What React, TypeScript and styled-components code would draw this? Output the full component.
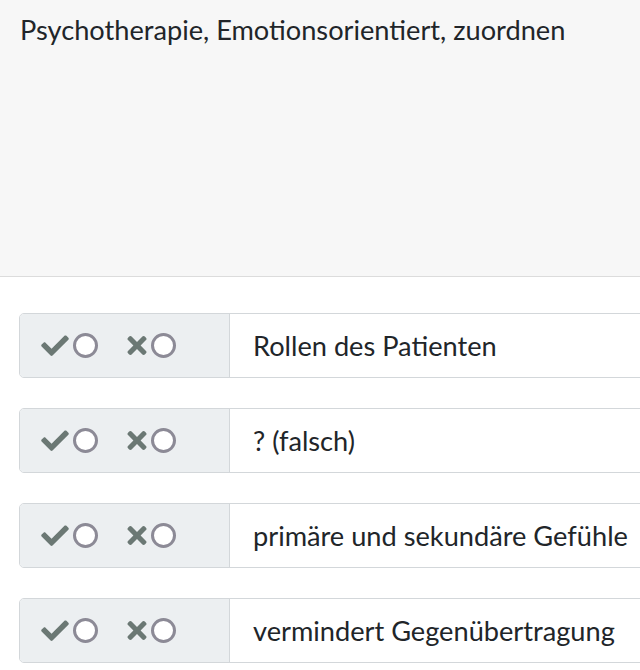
import React from "react";
import styled, { createGlobalStyle } from "styled-components";

const Global = createGlobalStyle`
  html, body { margin: 0; padding: 0; background: #ffffff; }
  body { font-family: Lato, "Open Sans", sans-serif; color: #212529; overflow: hidden; }
  * { box-sizing: border-box; }
`;

const Page = styled.div`
  width: 640px;
  height: 670px;
  overflow: hidden;
`;

const Question = styled.div`
  height: 277px;
  background: #f7f7f7;
  border-bottom: 1px solid #dcdcdc;
  padding: 14px 20px;
  font-size: 27.2px;
  line-height: 32px;
  color: #212529;
`;

const List = styled.div`
  display: flex;
  flex-direction: column;
  gap: 30px;
  padding: 36px 0 0 19px;
`;

const Row = styled.div`
  display: flex;
  width: 660px;
  height: 65px;
  border: 1px solid #d3d7da;
  border-radius: 5px;
  overflow: hidden;
`;

const Controls = styled.div`
  width: 210px;
  flex: none;
  display: flex;
  align-items: center;
  padding-left: 21px;
  gap: 29px;
  background: #eceff1;
  border-right: 1px solid #d3d7da;
`;

const Choice = styled.div`
  display: flex;
  align-items: center;
  gap: 4px;
`;

const Radio = styled.span`
  width: 25px;
  height: 25px;
  border-radius: 50%;
  border: 3px solid #8c8a96;
  background: #ffffff;
`;

const Answer = styled.div`
  flex: 1;
  display: flex;
  align-items: center;
  padding-left: 23px;
  font-size: 27.2px;
  background: #ffffff;
  color: #212529;
`;

const IconSvg = styled.svg`
  fill: #6b7874;
  display: block;
`;

const Check = () => (
  <IconSvg width="28" height="21" viewBox="0 0 512 390">
    <path d="M173.9 381.3L7.5 214.9c-10-10-10-26.2 0-36.2l36.2-36.2c10-10 26.2-10 36.2 0L192 254.6 432.1 14.5c10-10 26.2-10 36.2 0l36.2 36.2c10 10 10 26.2 0 36.2L210.1 381.3c-10 10-26.2 10-36.2 0z" />
  </IconSvg>
);

const Cross = () => (
  <IconSvg width="20" height="19" viewBox="0 0 352 352">
    <path d="M242.7 176L342.8 75.9c12.3-12.3 12.3-32.2 0-44.5L320.6 9.2c-12.3-12.3-32.2-12.3-44.5 0L176 109.3 75.9 9.2C63.6-3.1 43.7-3.1 31.4 9.2L9.2 31.4c-12.3 12.3-12.3 32.2 0 44.5L109.3 176 9.2 276.1c-12.3 12.3-12.3 32.2 0 44.5l22.2 22.2c12.300 12.3 32.2 12.3 44.5 0L176 242.7l100.1 100.1c12.3 12.3 32.2 12.3 44.5 0l22.2-22.2c12.3-12.3 12.3-32.2 0-44.5L242.7 176z" />
  </IconSvg>
);

const answers = [
  "Rollen des Patienten",
  "? (falsch)",
  "primäre und sekundäre Gefühle",
  "vermindert Gegenübertragung",
];

export default function App() {
  return (
    <Page>
      <Global />
      <Question>Psychotherapie, Emotionsorientiert, zuordnen</Question>
      <List>
        {answers.map((a) => (
          <Row key={a}>
            <Controls>
              <Choice>
                <Check />
                <Radio />
              </Choice>
              <Choice>
                <Cross />
                <Radio />
              </Choice>
            </Controls>
            <Answer>{a}</Answer>
          </Row>
        ))}
      </List>
    </Page>
  );
}
